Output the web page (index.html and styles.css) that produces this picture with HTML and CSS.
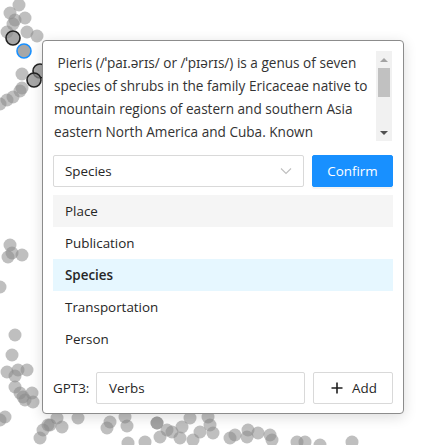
FILE: index.html
```html
<!DOCTYPE html>
<html>
<head>
<meta charset="utf-8">
<link rel="stylesheet" href="styles.css">
</head>
<body>
<svg class="scatter" width="436" height="445" viewBox="0 0 436 445">
  <g fill="#8a8a8a" fill-opacity="0.55">
    <circle cx="19" cy="5" r="6.5"/><circle cx="10" cy="13" r="6.5"/><circle cx="15" cy="20" r="6.5"/>
    <circle cx="25" cy="18" r="6.5"/><circle cx="13" cy="24" r="6.5"/><circle cx="7" cy="32" r="6.5"/>
    <circle cx="27" cy="32" r="6.5"/><circle cx="37" cy="36" r="6.5"/><circle cx="22" cy="74" r="6.5"/>
    <circle cx="22" cy="88" r="6.5"/><circle cx="20" cy="91" r="6.5"/><circle cx="13" cy="97" r="6.5"/>
    <circle cx="7" cy="100" r="6.5"/><circle cx="0" cy="104" r="6.5"/>
    <circle cx="10" cy="245" r="6.5"/><circle cx="8" cy="257" r="6.5"/><circle cx="22" cy="255" r="6.5"/>
    <circle cx="12" cy="253" r="6.5"/><circle cx="0" cy="287" r="6.5"/><circle cx="15" cy="335" r="6.5"/>
    <circle cx="12" cy="355" r="6.5"/><circle cx="7" cy="372" r="6.5"/><circle cx="15" cy="376" r="6.5"/>
    <circle cx="18" cy="370" r="6.5"/><circle cx="27" cy="370" r="6.5"/><circle cx="15" cy="387" r="6.5"/>
    <circle cx="20" cy="393" r="6.5"/><circle cx="23" cy="397" r="6.5"/><circle cx="32" cy="393" r="6.5"/>
    <circle cx="33" cy="402" r="6.5"/><circle cx="25" cy="400" r="6.5"/>
    <circle cx="5" cy="417" r="6.5"/><circle cx="0" cy="420" r="6.5"/><circle cx="48" cy="425" r="6.5"/>
    <circle cx="57" cy="418" r="6.5"/><circle cx="62" cy="427" r="6.5"/><circle cx="43" cy="430" r="6.5"/>
    <circle cx="50" cy="425" r="6.5"/><circle cx="40" cy="438" r="6.5"/><circle cx="78" cy="418" r="6.5"/>
    <circle cx="110" cy="422" r="6.5"/><circle cx="107" cy="428" r="6.5"/><circle cx="125" cy="417" r="6.5"/>
    <circle cx="127" cy="426" r="6.5"/><circle cx="157" cy="423" r="6.5"/><circle cx="157" cy="423" r="6.5"/>
    <circle cx="167" cy="430" r="6.5"/><circle cx="172" cy="432" r="6.5"/><circle cx="160" cy="437" r="6.5"/>
    <circle cx="182" cy="427" r="6.5"/><circle cx="190" cy="418" r="6.5"/><circle cx="208" cy="417" r="6.5"/>
    <circle cx="210" cy="425" r="6.5"/><circle cx="213" cy="433" r="6.5"/><circle cx="200" cy="432" r="6.5"/>
    <circle cx="180" cy="438" r="6.5"/><circle cx="193" cy="440" r="6.5"/><circle cx="145" cy="442" r="6.5"/>
    <circle cx="128" cy="443" r="6.5"/><circle cx="230" cy="438" r="6.5"/><circle cx="235" cy="435" r="6.5"/>
    <circle cx="248" cy="430" r="6.5"/><circle cx="258" cy="433" r="6.5"/><circle cx="270" cy="435" r="6.5"/>
    <circle cx="272" cy="440" r="6.5"/><circle cx="247" cy="437" r="6.5"/><circle cx="297" cy="442" r="6.5"/>
    <circle cx="305" cy="442" r="6.5"/><circle cx="320" cy="445" r="6.5"/><circle cx="352" cy="442" r="6.5"/>
  </g>
  <g fill="#8a8a8a" fill-opacity="0.75">
    <circle cx="13" cy="38" r="7" stroke="#222" stroke-width="1.6"/>
    <circle cx="24" cy="51" r="7" stroke="#1890ff" stroke-width="1.6"/>
    <circle cx="40" cy="71" r="7" stroke="#222" stroke-width="1.6"/>
    <circle cx="34" cy="80" r="7" stroke="#222" stroke-width="1.6"/>
  </g>
</svg>

<div class="panel">
  <div class="textbox">
    <div class="text">
      <span class="line">&nbsp;Pieris (/ˈpaɪ.ərɪs/ or /ˈpɪərɪs/) is a genus of seven</span>
      <span class="line">species of shrubs in the family Ericaceae native to</span>
      <span class="line">mountain regions of eastern and southern Asia</span>
      <span class="line">eastern North America and Cuba. Known</span>
    </div>
    <div class="scrollbar">
      <div class="arrow up"></div>
      <div class="track"><div class="thumb"></div></div>
      <div class="arrow down"></div>
    </div>
  </div>

  <div class="select-row">
    <div class="select">
      <span class="select-value">Species</span>
      <svg class="chevron" width="12" height="8" viewBox="0 0 12 8"><path d="M1 1.5 L6 6.5 L11 1.5" fill="none" stroke="#bfbfbf" stroke-width="1.1"/></svg>
    </div>
    <button class="btn primary">Confirm</button>
  </div>

  <ul class="options">
    <li class="option hover">Place</li>
    <li class="option">Publication</li>
    <li class="option selected">Species</li>
    <li class="option">Transportation</li>
    <li class="option">Person</li>
  </ul>

  <div class="divider"></div>

  <div class="add-row">
    <span class="label">GPT3:</span>
    <div class="input">Verbs</div>
    <button class="btn default">
      <svg class="plus" width="12" height="12" viewBox="0 0 12 12"><path d="M6 0.5 V11.5 M0.5 6 H11.5" stroke="#1f1f1f" stroke-width="1.6"/></svg>
      <span>Add</span>
    </button>
  </div>
</div>
</body>
</html>
```

FILE: styles.css
```css
* { box-sizing: border-box; }

html, body {
  margin: 0;
  padding: 0;
  width: 436px;
  height: 445px;
  overflow: hidden;
  background: #fff;
  font-family: "Open Sans", "Noto Sans", sans-serif;
  font-size: 13px;
  color: #333;
}

.scatter {
  position: absolute;
  left: 0;
  top: 0;
}

.panel {
  position: absolute;
  left: 42px;
  top: 40px;
  width: 362px;
  height: 374px;
  background: #fff;
  border: 1px solid #8c8c8c;
  border-radius: 4px;
  box-shadow: 0 3px 14px rgba(0, 0, 0, 0.14);
  padding: 10px 10px 9px 10px;
  display: flex;
  flex-direction: column;
}

.textbox {
  display: flex;
  height: 90px;
  padding-left: 1px;
}

.text {
  flex: 1;
  overflow: hidden;
  line-height: 23px;
  font-size: 13.6px;
  color: #333;
}

.line {
  display: block;
  white-space: nowrap;
}

.scrollbar {
  width: 16px;
  margin-right: 1px;
  background: #f1f1f1;
  display: flex;
  flex-direction: column;
  align-items: center;
}

.arrow {
  height: 17px;
  width: 16px;
  display: flex;
  align-items: center;
  justify-content: center;
}

.arrow.up::before {
  content: "";
  border-left: 4px solid transparent;
  border-right: 4px solid transparent;
  border-bottom: 4px solid #a3a3a3;
}

.arrow.down::before {
  content: "";
  border-left: 4px solid transparent;
  border-right: 4px solid transparent;
  border-top: 4px solid #505050;
}

.track {
  flex: 1;
  width: 100%;
  padding: 0 2px;
}

.thumb {
  height: 29px;
  background: #c1c1c1;
}

.select-row {
  display: flex;
  gap: 8px;
  margin-top: 14px;
  height: 32px;
}

.select {
  flex: 1;
  border: 1px solid #d9d9d9;
  border-radius: 2px;
  display: flex;
  align-items: center;
  justify-content: space-between;
  padding: 0 11px 0 11px;
}

.select-value {
  font-size: 13.4px;
  color: #262626;
}

.btn {
  font-family: inherit;
  font-size: 13.4px;
  border-radius: 2px;
  height: 32px;
  cursor: pointer;
}

.btn.primary {
  width: 81px;
  background: #1890ff;
  border: 1px solid #1890ff;
  color: #fff;
  box-shadow: 0 2px 0 rgba(0, 0, 0, 0.045);
}

.options {
  list-style: none;
  margin: 8px 0 0 0;
  padding: 0;
}

.option {
  height: 32px;
  line-height: 32px;
  padding: 0 12px;
  font-size: 13.4px;
  color: #262626;
}

.option.hover { background: #f5f5f5; }

.option.selected {
  background: #e6f7ff;
  font-weight: 600;
}

.divider {
  height: 1px;
  background: #ececec;
  margin-top: 8px;
}

.add-row {
  display: flex;
  align-items: center;
  margin-top: 9px;
  height: 32px;
}

.label {
  font-size: 13.4px;
  color: #262626;
  width: 43px;
}

.input {
  width: 209px;
  height: 32px;
  border: 1px solid #d9d9d9;
  border-radius: 2px;
  padding: 0 12px;
  display: flex;
  align-items: center;
  font-size: 13.4px;
  color: #262626;
}

.btn.default {
  margin-left: 8px;
  width: 80px;
  background: #fff;
  border: 1px solid #d9d9d9;
  color: #262626;
  display: flex;
  align-items: center;
  justify-content: center;
  gap: 9px;
  padding: 0 0 0 2px;
}
```
